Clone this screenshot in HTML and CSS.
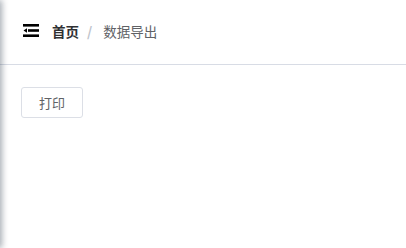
FILE: index.html
```html
<!DOCTYPE html>
<html lang="zh-CN">
<head>
<meta charset="utf-8">
<title>数据导出</title>
<link rel="stylesheet" href="styles.css">
</head>
<body>
<div class="sidebar-shadow"></div>
<div class="main">
  <header class="navbar">
    <span class="hamburger">
      <svg width="16" height="13" viewBox="0 0 16 13">
        <rect x="0" y="0" width="16" height="2.6" fill="#000"/>
        <rect x="5" y="5.2" width="11" height="2.6" fill="#000"/>
        <polygon points="0.5,6.5 4,4.2 4,8.8" fill="#000"/>
        <rect x="0" y="10.4" width="16" height="2.6" fill="#000"/>
      </svg>
    </span>
    <nav class="breadcrumb">
      <span class="crumb home">首页</span>
      <span class="sep">/</span>
      <span class="crumb current">数据导出</span>
    </nav>
  </header>
  <section class="content">
    <button class="btn" type="button">打印</button>
  </section>
</div>
</body>
</html>
```
FILE: styles.css
```css
html, body {
  margin: 0;
  padding: 0;
  background: #fff;
  height: 100%;
}
body {
  font-family: "Noto Sans CJK SC", "Noto Sans", sans-serif;
  overflow: hidden;
}
.sidebar-shadow {
  position: fixed;
  left: -20px;
  top: 0;
  width: 20px;
  height: 100%;
  background: #fff;
  box-shadow: 2px 0 6px rgba(0, 21, 41, 0.35);
}
.main {
  display: flex;
  flex-direction: column;
}
.navbar {
  height: 65px;
  box-sizing: border-box;
  border-bottom: 1px solid #d8dce5;
  display: flex;
  align-items: center;
  padding-left: 23px;
  padding-bottom: 3px;
}
.hamburger {
  display: flex;
  width: 16px;
  height: 13px;
}
.breadcrumb {
  margin-left: 13px;
  display: flex;
  align-items: center;
  font-size: 13.5px;
  line-height: 20px;
}
.home {
  font-weight: 700;
  color: #303133;
}
.sep {
  color: #c0c4cc;
  margin: 0 11px 0 8px;
  font-weight: 700;
}
.current {
  color: #606266;
}
.content {
  padding: 22px 21px;
}
.btn {
  font-family: inherit;
  font-size: 13px;
  color: #606266;
  background: #fff;
  border: 1px solid #dcdfe6;
  border-radius: 3px;
  height: 31px;
  width: 62px;
  padding: 0;
  cursor: pointer;
}
```
